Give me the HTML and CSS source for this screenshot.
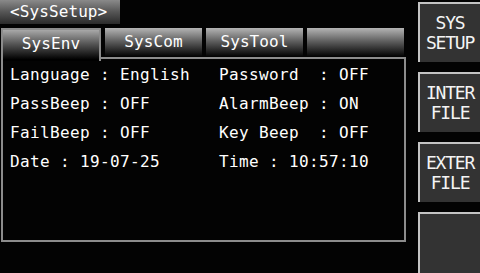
FILE: index.html
```html
<!DOCTYPE html>
<html lang="en">
<head>
    <meta charset="UTF-8">
    <meta name="viewport" content="width=device-width, initial-scale=1.0">
    <title>SysSetup</title>
    <link rel="stylesheet" href="styles.css">
</head>
<body>
    <div class="screen">
        <div class="main">
            <div class="title">&lt;SysSetup&gt;</div>
            <div class="tabs">
                <div class="tab active">SysEnv</div>
                <div class="tab">SysCom</div>
                <div class="tab">SysTool</div>
                <div class="tab"></div>
            </div>
            <div class="panel">
                <div class="row">
                    <span class="cell">Language : English</span>
                    <span class="cell">Password  : OFF</span>
                </div>
                <div class="row">
                    <span class="cell">PassBeep : OFF</span>
                    <span class="cell">AlarmBeep : ON</span>
                </div>
                <div class="row">
                    <span class="cell">FailBeep : OFF</span>
                    <span class="cell">Key Beep  : OFF</span>
                </div>
                <div class="row">
                    <span class="cell">Date : 19-07-25</span>
                    <span class="cell">Time : 10:57:10</span>
                </div>
            </div>
        </div>
        <div class="side">
            <div class="softkey">SYS<br>SETUP</div>
            <div class="softkey">INTER<br>FILE</div>
            <div class="softkey">EXTER<br>FILE</div>
            <div class="softkey"></div>
        </div>
    </div>
</body>
</html>
```
FILE: styles.css
```css
body {
    margin: 0;
    padding: 0;
    background: #030303;
    color: #fff;
    font-family: 'DejaVu Sans Mono', monospace;
    overflow: hidden;
}

.screen {
    display: flex;
    width: 480px;
    height: 273px;
}

.main {
    width: 418px;
}

.title {
    width: 120px;
    height: 24px;
    line-height: 24px;
    padding-left: 10px;
    box-sizing: border-box;
    font-size: 16px;
    letter-spacing: 0.1px;
    background: linear-gradient(#8a8a8a, #555 50%, #2a2a2a);
}

.tabs {
    display: flex;
    gap: 3px;
    margin-top: 4px;
    margin-left: 1px;
    height: 30px;
}

.tab {
    width: 97px;
    height: 28px;
    line-height: 28px;
    text-align: center;
    font-size: 16px;
    letter-spacing: 0.1px;
    background: linear-gradient(#b4b4b4, #5a5a5a 50%, #050505);
}

.tab + .tab {
    margin-left: 1px;
}

.tab.active {
    width: 96px;
    height: 31px;
    line-height: 28px;
    border: 2px solid #8c8c8c;
    border-bottom: none;
    background: linear-gradient(#a8a8a8, #555 45%, #000 95%);
    position: relative;
    z-index: 2;
}

.panel {
    margin-left: 1px;
    width: 405px;
    height: 185px;
    box-sizing: border-box;
    border: 2px solid #8c8c8c;
    margin-top: -1px;
    padding: 1px 0 0 7px;
}

.row {
    display: flex;
    height: 29px;
    line-height: 29px;
    font-size: 16px;
    letter-spacing: 0.37px;
    white-space: pre;
}

.cell {
    flex: none;
    width: 209px;
}

.cell + .cell {
    width: auto;
}

.side {
    width: 62px;
    display: flex;
    flex-direction: column;
    gap: 10px;
    padding-top: 2px;
}

.softkey {
    height: 58px;
    border-top: 2px solid #c4c4c4;
    border-left: 2px solid #c4c4c4;
    background: #333;
    display: flex;
    align-items: center;
    justify-content: center;
    text-align: center;
    font-size: 18px;
    line-height: 20px;
    letter-spacing: -1.2px;
    color: #f4f4f4;
}

.softkey:last-child {
    flex: 1;
}
```
